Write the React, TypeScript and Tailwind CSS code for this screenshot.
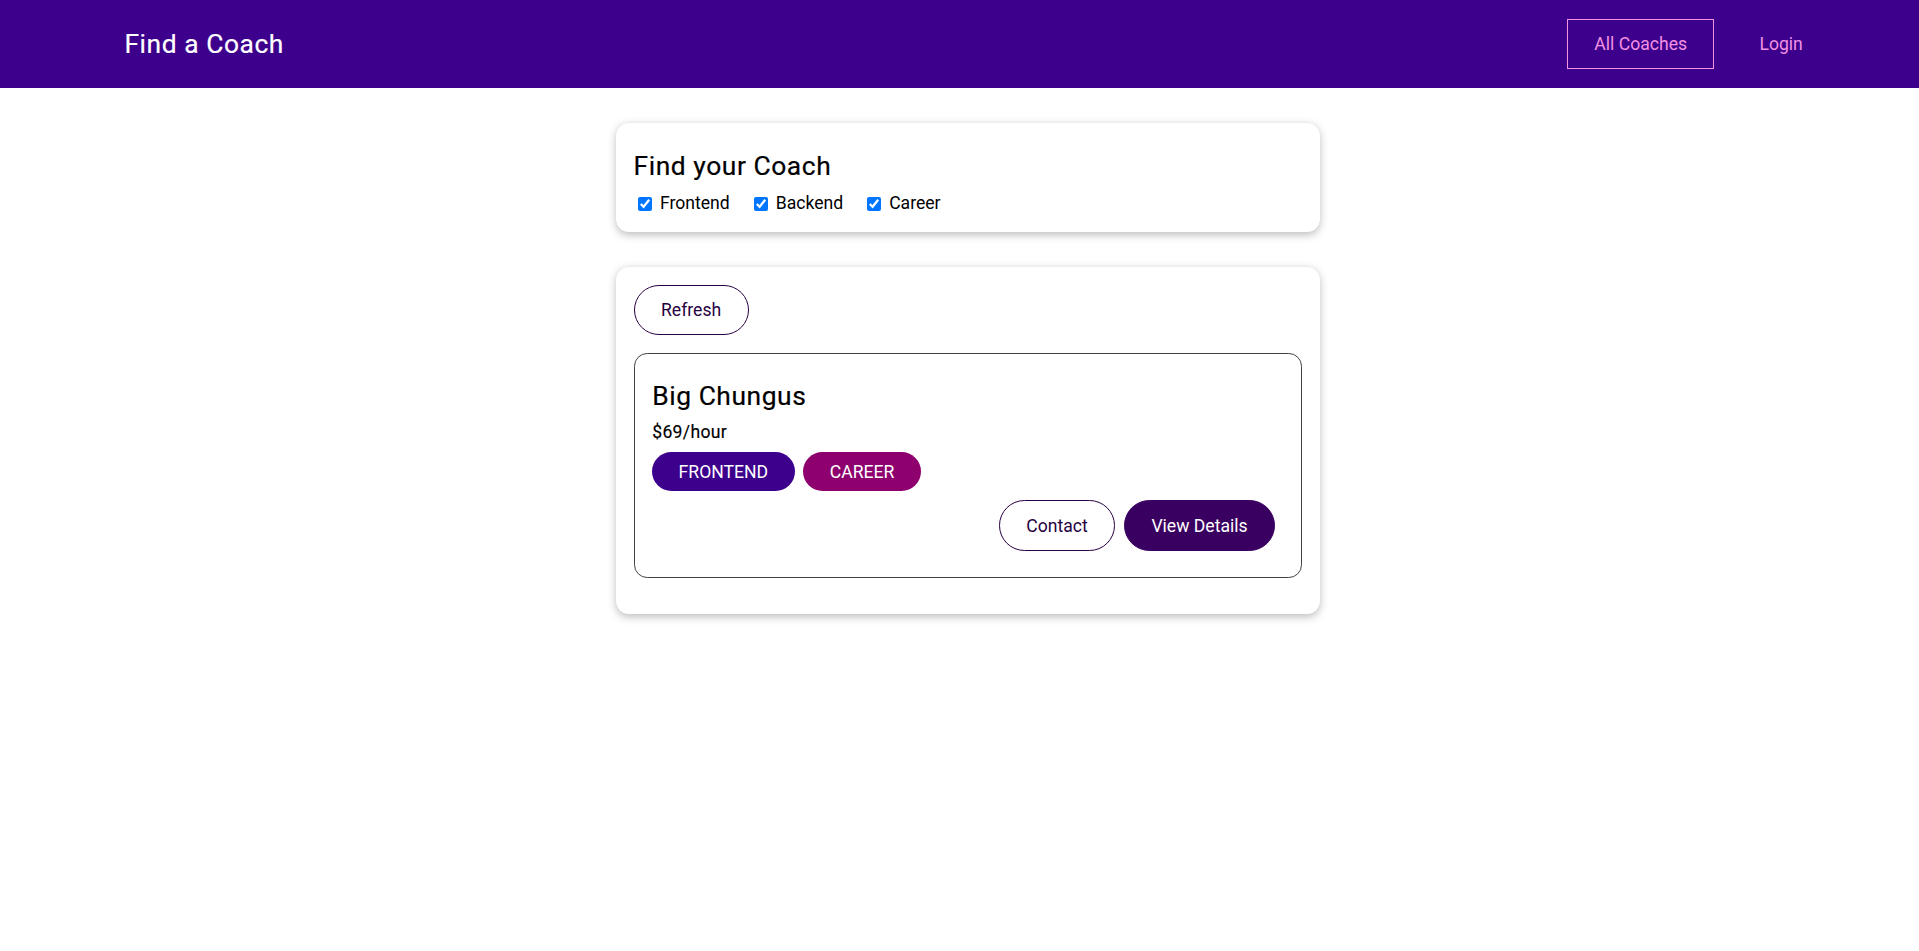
import React from "react";

const filters = [
  { id: "frontend", label: "Frontend" },
  { id: "backend", label: "Backend" },
  { id: "career", label: "Career" },
];

const heading = "font-normal tracking-[0.021em] [-webkit-text-stroke:0.2px_currentColor]";

export default function App() {
  return (
    <div className="min-h-[951px] w-full overflow-hidden bg-white font-['Roboto','Liberation_Sans',sans-serif] text-[17.6px] leading-[1.23] text-black">
      <header className="flex h-[88px] w-full items-center bg-[#3d008d]">
        <nav className="flex w-full items-center justify-between pl-[98px] pr-[80px]">
          <h1 className={`m-0 text-[26.4px] ${heading}`}>
            <a className="inline-block px-[26.4px] py-[13.2px] text-white" href="#">
              Find a Coach
            </a>
          </h1>
          <ul className="m-0 flex list-none items-center p-0">
            <li className="mx-[8.8px]">
              <a className="inline-block border border-[#f391e3] px-[26.4px] pb-[12.4px] pt-[14px] text-[#f391e3]" href="#">
                All Coaches
              </a>
            </li>
            <li className="mx-[8.8px]">
              <a className="inline-block border border-transparent px-[26.4px] pb-[12.4px] pt-[14px] text-[#f391e3]" href="#">
                Login
              </a>
            </li>
          </ul>
        </nav>
      </header>

      <main className="flex flex-col items-center pl-[17px]">
        <section className="mt-[35.2px] w-[704px] rounded-[13.2px] bg-white p-[17.6px] shadow-[0_2.2px_8.8px_rgba(0,0,0,0.26)]">
          <h2 className={`my-[8.8px] text-[26.4px] ${heading}`}>Find your Coach</h2>
          <div className="flex h-[23.7px] items-start">
            {filters.map((f) => (
              <span key={f.id} className="mr-[19.6px] flex items-start">
                <input
                  type="checkbox"
                  id={f.id}
                  defaultChecked
                  className="ml-[4.4px] mr-[7.7px] mt-[6.1px] h-[14.3px] w-[14.3px]"
                />
                <label htmlFor={f.id} className="mt-[2.3px]">
                  {f.label}
                </label>
              </span>
            ))}
          </div>
        </section>

        <section className="mt-[35.2px] w-[704px] rounded-[13.2px] bg-white p-[17.6px] shadow-[0_2.2px_8.8px_rgba(0,0,0,0.26)]">
          <div className="flex justify-between">
            <button className="mr-[8.8px] rounded-[33px] border border-[#270041] bg-transparent px-[26.4px] pb-[12.4px] pt-[14.4px] text-[#270041]">
              Refresh
            </button>
          </div>
          <ul className="m-0 list-none p-0">
            <li className="my-[17.6px] rounded-[13.2px] border border-[#424242] p-[17.6px]">
              <h3 className={`my-[8.8px] text-[26.4px] ${heading}`}>Big Chungus</h3>
              <h4 className="my-[8.8px] text-[17.6px] font-normal tracking-[0.018em] [-webkit-text-stroke:0.15px_currentColor]">
                $69/hour
              </h4>
              <div className="my-[8.8px] flex">
                <span className="mr-[8.8px] inline-block rounded-[33px] bg-[#3d008d] px-[26.4px] pb-[7.4px] pt-[10.2px] text-white">
                  FRONTEND
                </span>
                <span className="mr-[8.8px] inline-block rounded-[33px] bg-[#8d006e] px-[26.4px] pb-[7.4px] pt-[10.2px] text-white">
                  CAREER
                </span>
              </div>
              <div className="my-[8.8px] flex justify-end">
                <button className="mr-[8.8px] rounded-[33px] border border-[#270041] bg-transparent px-[26.4px] pb-[12.8px] pt-[14.6px] text-[#270041]">
                  Contact
                </button>
                <button className="mr-[8.8px] rounded-[33px] border border-[#3a0061] bg-[#3a0061] px-[26.4px] pb-[12.8px] pt-[14.6px] text-white">
                  View Details
                </button>
              </div>
            </li>
          </ul>
        </section>
      </main>
    </div>
  );
}
